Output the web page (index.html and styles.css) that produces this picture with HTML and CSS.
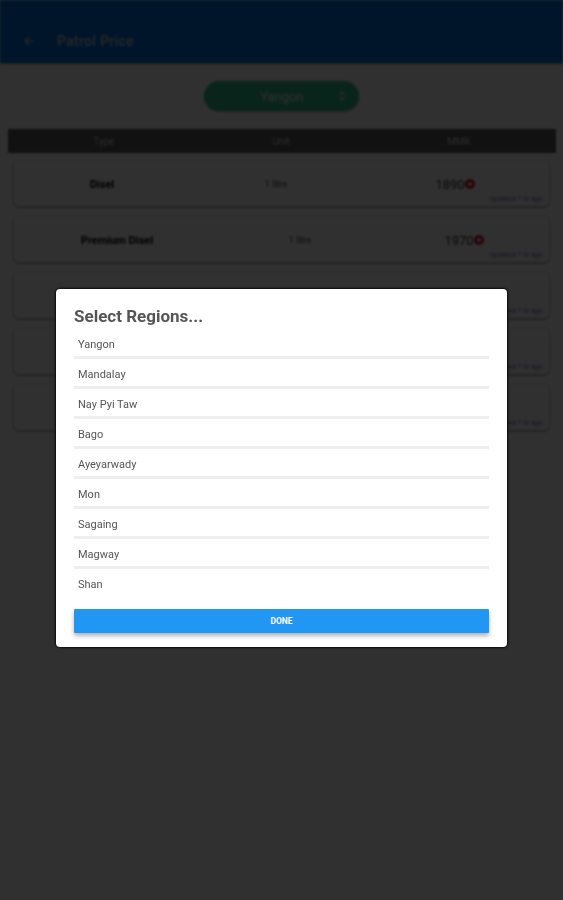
FILE: index.html
```html
<!DOCTYPE html>
<html lang="en">
<head>
  <meta charset="UTF-8" />
  <meta name="viewport" content="width=device-width, initial-scale=1.0" />
  <title>Patrol Price</title>
  <link rel="stylesheet" href="styles.css">
</head>
<body>
  <div class="page">
    <div class="appbar">
      <svg class="back" width="14" height="14" viewBox="0 0 24 24"><path d="M20 11H7.8l5.6-5.6L12 4l-8 8 8 8 1.4-1.4L7.8 13H20z" fill="#ddd"/></svg>
      <h1>Patrol Price</h1>
    </div>

    <div class="picker-row">
      <div class="picker">
        <span>Yangon</span>
        <svg class="updown" width="8" height="12" viewBox="0 0 8 12"><path d="M4 1l3 4H1zM4 11L1 7h6z" fill="#ddd"/></svg>
      </div>
    </div>

    <div class="table-head">
      <span>Type</span>
      <span>Unit</span>
      <span>MMK</span>
    </div>

    <div class="cards">
      <div class="card">
        <div class="card-row">
          <b class="fuel">Disel</b>
          <span class="unit">1 litre</span>
          <span class="price">1890<i class="dot"></i></span>
        </div>
        <small>Updated 1 hr ago</small>
      </div>
      <div class="card">
        <div class="card-row">
          <b class="fuel fuel-long">Premium Disel</b>
          <span class="unit shift">1 litre</span>
          <span class="price shift">1970<i class="dot"></i></span>
        </div>
        <small>Updated 1 hr ago</small>
      </div>
      <div class="card"><small>Updated 1 hr ago</small></div>
      <div class="card"><small>Updated 1 hr ago</small></div>
      <div class="card"><small>Updated 1 hr ago</small></div>
    </div>
  </div>

  <div class="overlay">
    <div class="dialog">
      <h2>Select Regions...</h2>
      <ul class="regions">
        <li>Yangon</li>
        <li>Mandalay</li>
        <li>Nay Pyi Taw</li>
        <li>Bago</li>
        <li>Ayeyarwady</li>
        <li>Mon</li>
        <li>Sagaing</li>
        <li>Magway</li>
        <li>Shan</li>
      </ul>
      <button type="button" class="done">DONE</button>
    </div>
  </div>
</body>
</html>
```

FILE: styles.css
```css
*, *::before, *::after { box-sizing: border-box; }
html, body {
  margin: 0;
  padding: 0;
  height: 900px;
  overflow: hidden;
}
body {
  font-family: Roboto, "Liberation Sans", sans-serif;
  background-color: #fff;
  position: relative;
}
.page { filter: blur(0.8px); }

.appbar {
  height: 63px;
  padding: 18px 0 0 22px;
  background-color: #0070e0;
  color: #ccc;
  display: flex;
  align-items: center;
  box-shadow: 0 1px 2px rgba(0, 0, 0, 0.4);
}
.back { margin-right: 21px; }
.appbar h1 {
  margin: 0;
  font-size: 14px;
  font-weight: 500;
  letter-spacing: 0.3px;
}

.picker-row {
  display: flex;
  justify-content: center;
  padding-top: 18px;
}
.picker {
  width: 155px;
  height: 30px;
  border-radius: 15px;
  background-color: #30c090;
  color: #fff;
  font-size: 13px;
  display: flex;
  align-items: center;
  justify-content: center;
  padding-left: 1px;
  position: relative;
  box-shadow: 0 1px 2px rgba(0, 0, 0, 0.3);
}
.updown {
  position: absolute;
  right: 13px;
  top: 9px;
}

.table-head {
  margin: 18px 7px 0 8px;
  height: 24px;
  background-color: #5a5a5a;
  color: #ddd;
  font-size: 10px;
  display: grid;
  grid-template-columns: 192px 162px 194px;
  align-items: center;
  text-align: center;
}

.cards {
  margin: 8px 14px 0;
  display: flex;
  flex-direction: column;
  gap: 11px;
}
.card {
  height: 45px;
  background-color: #fff;
  border-radius: 5px;
  box-shadow: 0 1px 3px rgba(0, 0, 0, 0.5);
  position: relative;
  padding-top: 15px;
}
.card small {
  position: absolute;
  right: 6px;
  bottom: 3px;
  font-size: 7px;
  color: #5d70b8;
}
.card-row {
  display: grid;
  grid-template-columns: 176px 172px 1fr;
  align-items: center;
  text-align: center;
  height: 16px;
}
.fuel {
  font-size: 11px;
  color: #000;
}
.fuel-long { transform: translateX(15px); }
.unit {
  font-size: 9px;
  color: #333;
}
.unit.shift { transform: translateX(24px); }
.price {
  font-size: 13px;
  color: #333;
  display: flex;
  align-items: center;
  justify-content: center;
  padding-right: 1px;
}
.price.shift { transform: translateX(9px); }
.dot {
  width: 10px;
  height: 10px;
  border-radius: 50%;
  border: 3px solid #e00a28;
}

.overlay {
  position: absolute;
  inset: 0;
  background-color: rgba(0, 0, 0, 0.81);
}
.dialog {
  position: absolute;
  left: 56px;
  top: 289px;
  width: 451px;
  height: 358px;
  padding: 17px 18px 0;
  background-color: #fff;
  border-radius: 4px;
  box-shadow: 0 0 2px 1px rgba(0, 0, 0, 0.8);
}
.dialog h2 {
  margin: 0;
  font-size: 17px;
  font-weight: 700;
  line-height: 20px;
  color: #555;
  filter: blur(0.5px);
}
.regions {
  list-style: none;
  margin: 3px 0 0;
  padding: 0;
  filter: blur(0.6px);
}
.regions li {
  height: 30px;
  padding: 8.5px 0 0 4px;
  font-size: 11px;
  line-height: 14px;
  color: #555;
  border-bottom: 3px solid #eee;
}
.regions li:last-child { border-bottom: none; }
.done {
  display: block;
  width: 100%;
  height: 24px;
  margin-top: 10px;
  border: none;
  border-radius: 1px;
  background-color: #2196f3;
  color: #fff;
  font-family: inherit;
  font-size: 8.5px;
  font-weight: 700;
  box-shadow: 0 3px 4px rgba(0, 0, 0, 0.3);
}
```
